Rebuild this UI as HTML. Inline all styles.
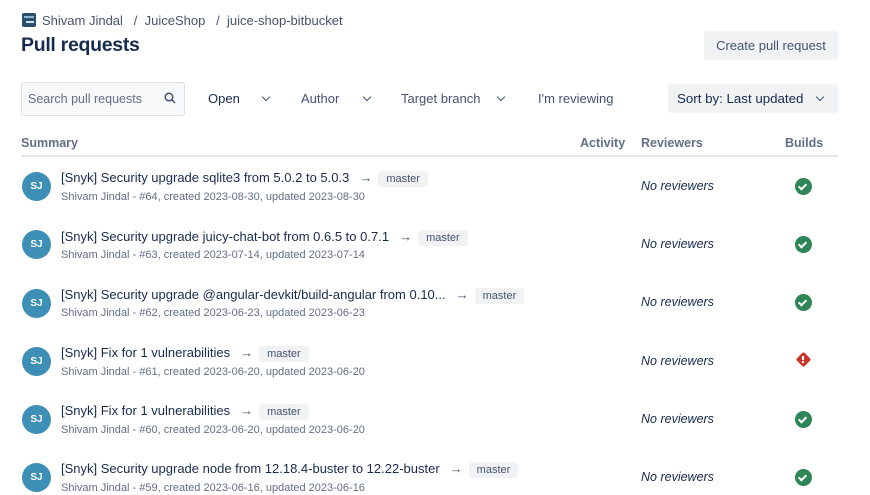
<!DOCTYPE html><html><head><style>
body{margin:0;width:870px;height:495px;background:#fff;font-family:"Liberation Sans",sans-serif;color:#172b4d;position:relative;overflow:hidden}
.a{position:absolute;white-space:nowrap}
.bc{font-size:13px;color:#44546f;top:13px;left:42px}
.btn{background:#f1f2f4;border-radius:3px}
.dd{font-size:13px;color:#44546f}
.chev{display:inline-block;width:5px;height:5px;border-right:1.6px solid #44546f;border-bottom:1.6px solid #44546f;transform:rotate(45deg);position:absolute}
.hd{font-size:12.5px;font-weight:bold;color:#626f86;top:136px}
.av{width:29px;height:29px;border-radius:50%;background:#3d8fb5;color:#fff;font-size:10px;font-weight:bold;text-align:center;line-height:29px;left:22px}
.t{font-size:13px;left:61px;color:#172b4d}
.s{font-size:11px;left:61px;color:#626f86}
.tag{background:#f1f2f4;color:#44546f;font-size:11px;padding:2px 8px;border-radius:3px;margin-left:6px}
.arr{color:#44546f;margin-left:10px}
.nr{font-size:12.5px;font-style:italic;left:641px}
.ok{left:795px;width:17px;height:17px;border-radius:50%;background:#2e8555}
.ok::after{content:"";position:absolute;left:5px;top:4px;width:3px;height:6px;border-right:2px solid #fff;border-bottom:2px solid #fff;transform:rotate(45deg)}
</style></head><body>
<div class="a" style="left:22px;top:13px;width:14px;height:14px;background:#2d4f6e;border-radius:2px"><div style="margin:3px 2px;height:2px;background:#8fb3d1"></div><div style="margin:2px 2px 0 4px;height:2px;background:#cfe0ee"></div></div>
<div class="a bc">Shivam Jindal &nbsp; / &nbsp;JuiceShop &nbsp; / &nbsp;juice-shop-bitbucket</div>
<div class="a" style="left:21px;top:34px;font-size:19.5px;font-weight:bold;letter-spacing:-0.3px">Pull requests</div>
<div class="a btn" style="left:704px;top:31px;width:134px;height:29px;font-size:13px;color:#44546f;line-height:29px;text-align:center">Create pull request</div>
<div class="a" style="left:21px;top:82px;width:162px;height:32px;border:1.5px solid #dcdfe4;border-radius:3px;background:#f7f8f9"></div>
<div class="a" style="left:28px;top:92px;font-size:12.5px;color:#626f86">Search pull requests</div>
<svg class="a" style="left:164px;top:92px" width="12" height="12" viewBox="0 0 12 12"><circle cx="5" cy="5" r="3.8" fill="none" stroke="#44546f" stroke-width="1.5"/><path d="M8 8l3 3" stroke="#44546f" stroke-width="1.5"/></svg>
<div class="a dd" style="left:208px;top:91px;color:#172b4d">Open</div><span class="chev" style="left:263px;top:94px"></span>
<div class="a dd" style="left:301px;top:91px">Author</div><span class="chev" style="left:364px;top:94px"></span>
<div class="a dd" style="left:401px;top:91px">Target branch</div><span class="chev" style="left:498px;top:94px"></span>
<div class="a dd" style="left:538px;top:91px">I'm reviewing</div>
<div class="a btn" style="left:668px;top:84px;width:170px;height:29px"></div>
<div class="a dd" style="left:677px;top:91px;color:#172b4d;font-size:13.3px">Sort by: Last updated</div><span class="chev" style="left:817px;top:94px"></span>
<div class="a hd" style="left:21px">Summary</div>
<div class="a hd" style="left:580px">Activity</div>
<div class="a hd" style="left:641px">Reviewers</div>
<div class="a hd" style="left:785px">Builds</div>
<div class="a" style="left:21px;top:155px;width:817px;height:2px;background:#e6e8eb"></div>

<div class="a av" style="top:172px">SJ</div>
<div class="a t" style="top:170px">[Snyk] Security upgrade sqlite3 from 5.0.2 to 5.0.3<span class="arr">→</span><span class="tag">master</span></div>
<div class="a s" style="top:191px">Shivam Jindal - #64, created 2023-08-30, updated 2023-08-30</div>
<div class="a nr" style="top:179px">No reviewers</div>
<div class="a ok" style="top:178px"></div>

<div class="a av" style="top:230px">SJ</div>
<div class="a t" style="top:229px">[Snyk] Security upgrade juicy-chat-bot from 0.6.5 to 0.7.1<span class="arr">→</span><span class="tag">master</span></div>
<div class="a s" style="top:249px">Shivam Jindal - #63, created 2023-07-14, updated 2023-07-14</div>
<div class="a nr" style="top:237px">No reviewers</div>
<div class="a ok" style="top:236px"></div>

<div class="a av" style="top:289px">SJ</div>
<div class="a t" style="top:287px">[Snyk] Security upgrade @angular-devkit/build-angular from 0.10...<span class="arr">→</span><span class="tag">master</span></div>
<div class="a s" style="top:307px">Shivam Jindal - #62, created 2023-06-23, updated 2023-06-23</div>
<div class="a nr" style="top:295px">No reviewers</div>
<div class="a ok" style="top:294px"></div>

<div class="a av" style="top:347px">SJ</div>
<div class="a t" style="top:345px">[Snyk] Fix for 1 vulnerabilities<span class="arr">→</span><span class="tag">master</span></div>
<div class="a s" style="top:366px">Shivam Jindal - #61, created 2023-06-20, updated 2023-06-20</div>
<div class="a nr" style="top:354px">No reviewers</div>
<div class="a" style="left:798px;top:354px;width:11px;height:11px;background:#c9372c;transform:rotate(45deg);border-radius:2px"></div>

<div class="a av" style="top:405px">SJ</div>
<div class="a t" style="top:403px">[Snyk] Fix for 1 vulnerabilities<span class="arr">→</span><span class="tag">master</span></div>
<div class="a s" style="top:424px">Shivam Jindal - #60, created 2023-06-20, updated 2023-06-20</div>
<div class="a nr" style="top:412px">No reviewers</div>
<div class="a ok" style="top:411px"></div>

<div class="a av" style="top:463px">SJ</div>
<div class="a t" style="top:461px">[Snyk] Security upgrade node from 12.18.4-buster to 12.22-buster<span class="arr">→</span><span class="tag">master</span></div>
<div class="a s" style="top:482px">Shivam Jindal - #59, created 2023-06-16, updated 2023-06-16</div>
<div class="a nr" style="top:470px">No reviewers</div>
<div class="a ok" style="top:469px"></div>
<div class="a" style="left:802px;top:356px;width:2px;height:4px;background:#fff"></div><div class="a" style="left:802px;top:361px;width:2px;height:1.5px;background:#fff"></div>
</body></html>
